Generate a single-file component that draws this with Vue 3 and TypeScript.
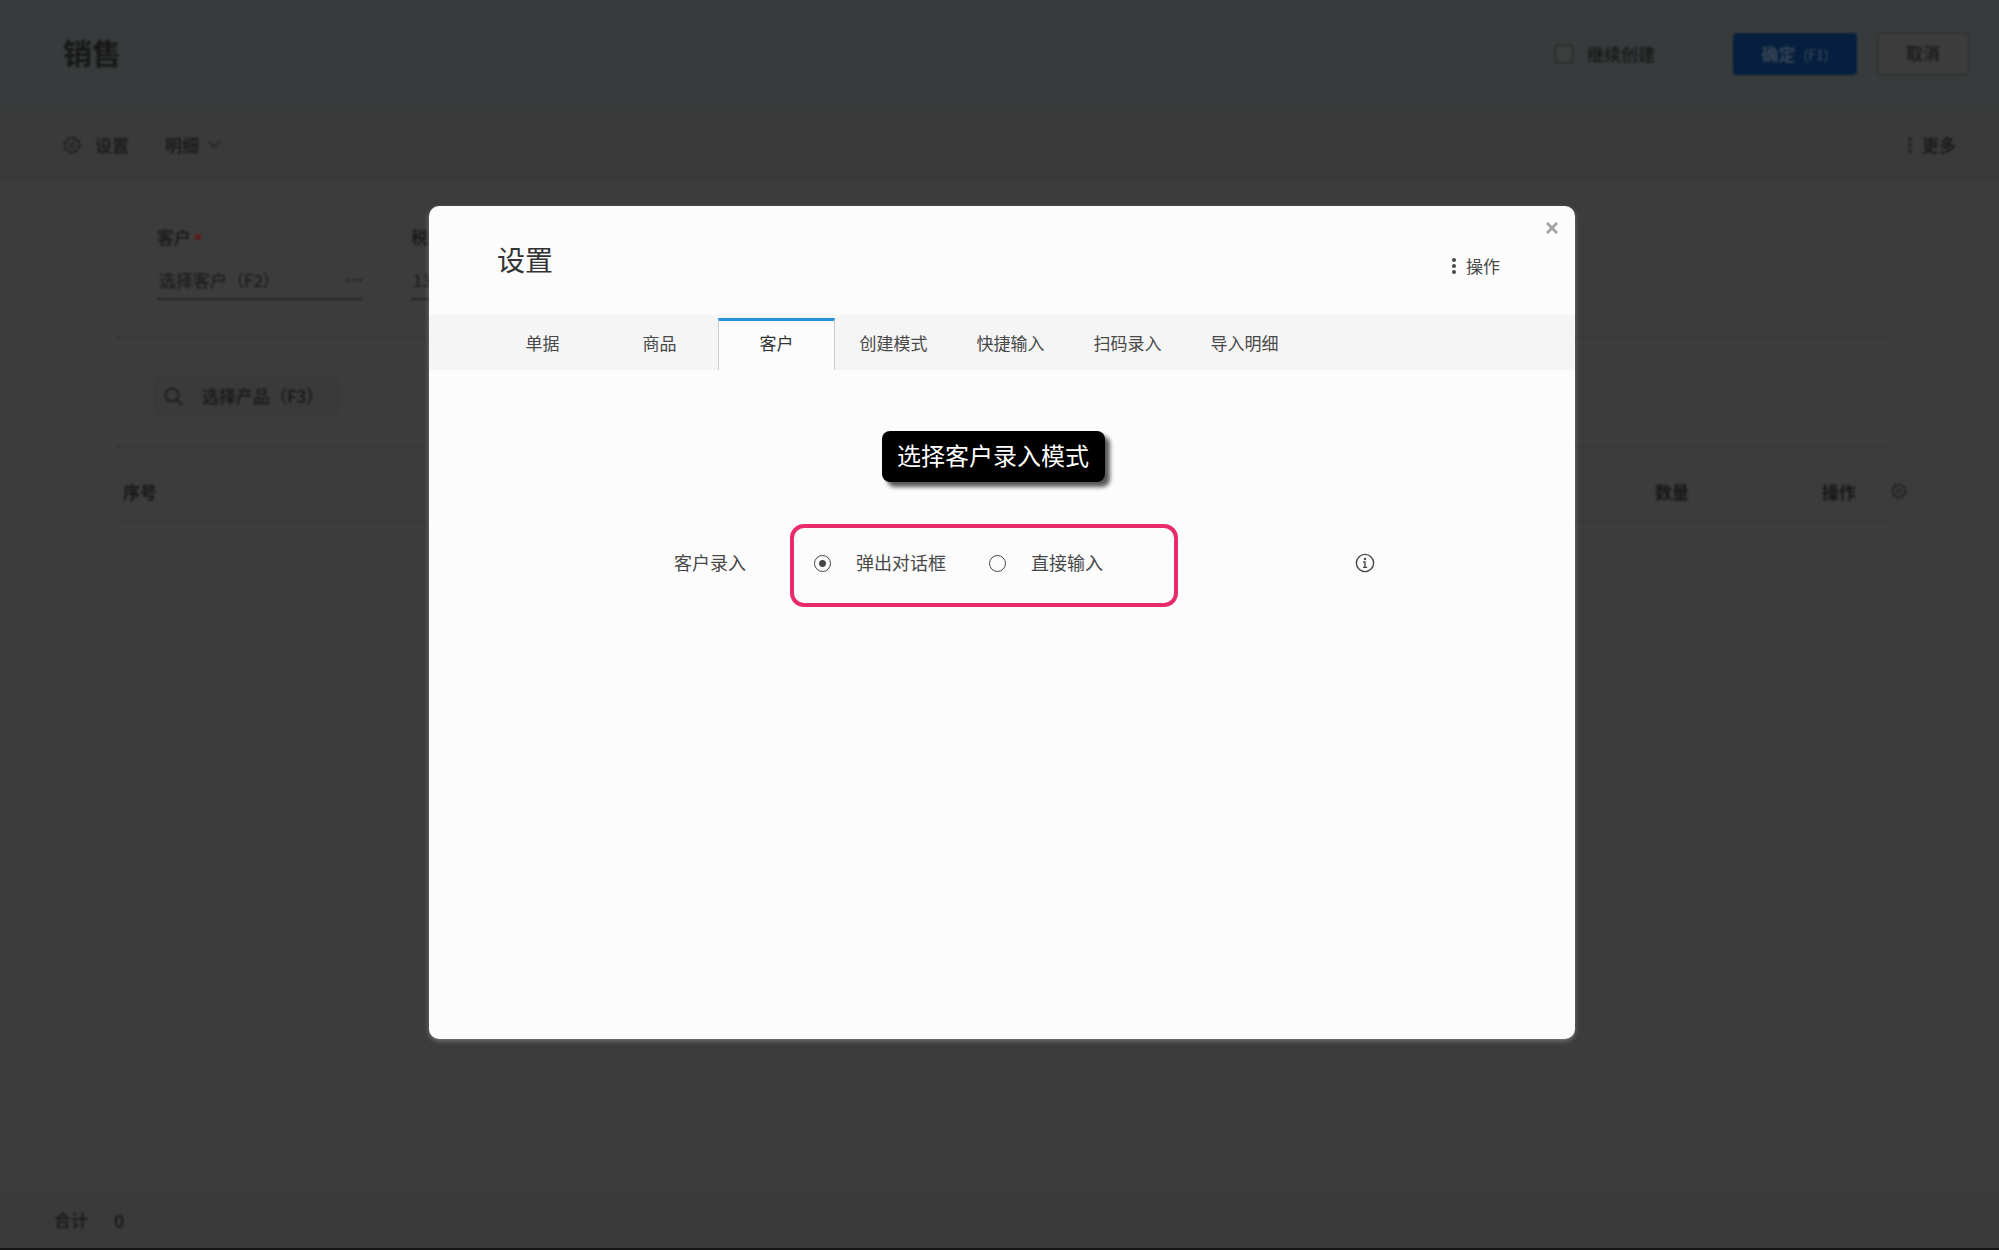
<script setup lang="ts">
import { ref } from 'vue'

const tabs: string[] = ['单据', '商品', '客户', '创建模式', '快捷输入', '扫码录入', '导入明细']
const activeTab = ref('客户')
const entryMode = ref('dialog')
const modes = [
  { value: 'dialog', label: '弹出对话框' },
  { value: 'direct', label: '直接输入' },
]
</script>

<template>
  <div class="app">
    <div class="page">
      <header class="topbar">
        <h1>销售</h1>
        <label class="again"><input type="checkbox" />继续创建</label>
        <button class="btn primary" type="button">确定 <small>(F1)</small></button>
        <button class="btn plain" type="button">取消</button>
      </header>

      <nav class="toolbar">
        <button type="button" class="tool">
          <svg class="gear" width="18" height="18" viewBox="0 0 18 18" fill="none" stroke="currentColor" stroke-width="1.3">
            <circle cx="9" cy="9" r="8" stroke-dasharray="3.3 3" stroke-width="1.6" />
            <circle cx="9" cy="9" r="6.8" />
            <circle cx="9" cy="9" r="2.4" />
          </svg>
          设置
        </button>
        <button type="button" class="tool detail">
          明细
          <svg width="14" height="9" viewBox="0 0 14 9" fill="none" stroke="currentColor" stroke-width="1.4"><path d="M1 1l6 6 6-6" /></svg>
        </button>
        <button type="button" class="tool more">
          <svg width="4" height="16" viewBox="0 0 4 16" fill="currentColor"><circle cx="2" cy="2" r="2" /><circle cx="2" cy="8" r="2" /><circle cx="2" cy="14" r="2" /></svg>
          更多
        </button>
      </nav>

      <main class="sheet">
        <form class="fields" @submit.prevent>
          <div class="field">
            <label for="customer">客户<i class="required"></i></label>
            <div class="control">
              <input id="customer" type="text" placeholder="选择客户（F2）" />
              <svg width="16" height="4" viewBox="0 0 16 4" fill="currentColor"><circle cx="2" cy="2" r="1.5" /><circle cx="8" cy="2" r="1.5" /><circle cx="14" cy="2" r="1.5" /></svg>
            </div>
          </div>
          <div class="field">
            <label for="tax">税率</label>
            <div class="control"><input id="tax" type="text" value="13" /></div>
          </div>
        </form>
        <hr class="divider" />

        <div class="picker">
          <button type="button" class="search">
            <svg width="19" height="19" viewBox="0 0 19 19" fill="none" stroke="currentColor" stroke-width="1.5"><circle cx="8" cy="8" r="6.5" /><path d="M12.7 12.7L18 18" /></svg>
            选择产品（F3）
          </button>
        </div>
        <hr class="divider" />

        <table class="items">
          <thead>
            <tr>
              <th>序号</th>
              <th class="qty">数量</th>
              <th class="ops">操作</th>
            </tr>
          </thead>
        </table>
        <button type="button" class="columns" aria-label="列设置">
          <svg width="16" height="16" viewBox="0 0 18 18" fill="none" stroke="currentColor" stroke-width="1.3">
            <circle cx="9" cy="9" r="8" stroke-dasharray="3.3 3" stroke-width="1.6" />
            <circle cx="9" cy="9" r="6.8" />
            <circle cx="9" cy="9" r="2.4" />
          </svg>
        </button>
      </main>

      <footer class="totals"><span>合计</span><span class="sum">0</span></footer>
    </div>

    <div class="overlay">
      <section class="dialog" role="dialog" aria-labelledby="dialog-title">
        <button class="close" type="button" aria-label="关闭">
          <svg width="12" height="12" viewBox="0 0 12 12" fill="none" stroke="currentColor" stroke-width="3"><path d="M1 1l10 10M11 1L1 11" /></svg>
        </button>
        <header class="dialog-head">
          <h2 id="dialog-title">设置</h2>
          <button type="button" class="actions">
            <svg width="4" height="16" viewBox="0 0 4 16" fill="currentColor"><circle cx="2" cy="2" r="2" /><circle cx="2" cy="8" r="2" /><circle cx="2" cy="14" r="2" /></svg>
            操作
          </button>
        </header>
        <div class="tabs" role="tablist">
          <button
            v-for="tab in tabs"
            :key="tab"
            type="button"
            role="tab"
            class="tab"
            :class="{ active: tab === activeTab }"
            :aria-selected="tab === activeTab"
            @click="activeTab = tab"
          >{{ tab }}</button>
        </div>
        <div class="dialog-body">
          <p class="hint">选择客户录入模式</p>
          <div class="setting">
            <span id="mode-label" class="setting-name">客户录入</span>
            <div class="modes" role="radiogroup" aria-labelledby="mode-label">
              <label v-for="mode in modes" :key="mode.value">
                <input v-model="entryMode" type="radio" name="mode" :value="mode.value" />
                <span>{{ mode.label }}</span>
              </label>
            </div>
            <button type="button" class="info" aria-label="说明">
              <svg width="20" height="20" viewBox="0 0 20 20" fill="none" stroke="currentColor" stroke-width="1.4">
                <circle cx="10" cy="10" r="8.6" />
                <circle cx="10" cy="6" r="1.2" fill="currentColor" stroke="none" />
                <path d="M8.2 9H10v5.2M8 14.4h4.2" />
              </svg>
            </button>
          </div>
        </div>
      </section>
    </div>
  </div>
</template>

<style>
body {
  margin: 0;
  background: #393a3a;
}
</style>

<style scoped>
.app {
  position: relative;
  min-height: 100vh;
  box-sizing: border-box;
  border-bottom: 2px solid #151515;
  display: flex;
  flex-direction: column;
  overflow: hidden;
  font-family: "Noto Sans CJK SC", "Noto Sans", sans-serif;
  font-size: 17px;
  line-height: 24px;
}
button,
input {
  font: inherit;
  color: inherit;
  margin: 0;
}
button {
  border: 0;
  padding: 0;
  background: none;
  display: flex;
  align-items: center;
}
h1,
h2,
p {
  margin: 0;
}
.page {
  flex: 1;
  display: flex;
  flex-direction: column;
  background: #3c3c3c;
  color: #161616;
  font-weight: 500;
  filter: blur(1px);
}
.topbar {
  height: 108px;
  padding: 0 30px 0 63px;
  box-sizing: border-box;
  display: flex;
  align-items: center;
  background: #373b3c;
}
h1 {
  margin-right: auto;
  padding-bottom: 4px;
  font-size: 29px;
  line-height: 40px;
  font-weight: 700;
}
.again {
  display: flex;
  align-items: center;
  gap: 14px;
  margin-right: 78px;
}
.again input {
  appearance: none;
  width: 18px;
  height: 18px;
  border: 1px solid #222424;
  border-radius: 2px;
  background: #3c3d3d;
}
.btn {
  height: 42px;
  box-sizing: border-box;
  justify-content: center;
  border-radius: 4px;
}
.primary {
  width: 124px;
  gap: 8px;
  margin-right: 20px;
  background: #061f3e;
  color: #414d5a;
}
.primary small {
  font-size: 14px;
  font-weight: 400;
}
.plain {
  width: 92px;
  padding-bottom: 3px;
  background: #3c3c3c;
  border: 1px solid #2a2c2c;
}
.toolbar {
  height: 73px;
  padding: 0 43px 0 63px;
  display: flex;
  align-items: center;
  background: #3a3a3a;
}
.tool {
  gap: 14px;
}
.tool svg {
  color: #202020;
}
.detail {
  margin-left: 36px;
  gap: 8px;
}
.more {
  margin-left: auto;
  gap: 10px;
}
.sheet {
  flex: 1;
  margin: 0 110px 0 116px;
  position: relative;
}
.divider {
  height: 2px;
  margin: 0;
  border: 0;
  background: repeating-linear-gradient(90deg, #323232 0 4px, transparent 4px 8px);
}
.fields {
  display: flex;
  gap: 49px;
  padding: 44px 0 36px 41px;
}
.field {
  width: 205px;
}
.field label {
  display: flex;
  align-items: center;
  gap: 4px;
}
.required {
  width: 6px;
  height: 6px;
  border-radius: 50%;
  background: #601515;
}
.control {
  display: flex;
  align-items: center;
  height: 36px;
  margin-top: 13px;
  border-bottom: 2px solid #242424;
}
.control input {
  flex: 1;
  min-width: 0;
  height: 24px;
  border: 0;
  padding: 0 0 0 2px;
  background: none;
  font-weight: 400;
}
.control input::placeholder {
  color: #161616;
  opacity: 1;
}
.control svg {
  color: #202020;
}
.picker {
  padding: 39px 0 31px 39px;
}
.search {
  width: 183px;
  height: 38px;
  box-sizing: border-box;
  padding-left: 8px;
  gap: 19px;
  white-space: nowrap;
  border: 1px solid #363636;
  border-radius: 4px;
  background: #3a3a3a;
}
.items {
  width: 100%;
  height: 75px;
  border-collapse: collapse;
  border-bottom: 1px solid #353535;
}
.items th {
  padding: 13px 0 0 7px;
  text-align: left;
  font-weight: 700;
}
.items .qty {
  width: 160px;
}
.items .ops {
  width: 67px;
}
.columns {
  position: absolute;
  right: -18px;
  top: 302px;
  color: #202020;
}
.totals {
  height: 53px;
  padding: 0 54px 2px;
  display: flex;
  align-items: center;
  gap: 26px;
  background: #3a3a3a;
}
.sum {
  font-size: 18px;
}
.overlay {
  position: absolute;
  inset: 0;
  padding: 206px 0 0 5px;
  display: flex;
  justify-content: center;
  align-items: flex-start;
}
.dialog {
  position: relative;
  width: 90%;
  max-width: 1146px;
  min-height: 833px;
  border-radius: 10px;
  background: #fcfcfc;
  color: #484848;
  box-shadow: 0 2px 5px rgba(255, 255, 255, 0.3);
}
.close {
  position: absolute;
  top: 16px;
  right: 17px;
  color: #a5a5a5;
}
.dialog-head {
  height: 109px;
  padding: 0 75px 0 68px;
  display: flex;
  align-items: center;
  justify-content: space-between;
}
h2 {
  padding-bottom: 3px;
  font-size: 28px;
  line-height: 40px;
  font-weight: 400;
  color: #333;
}
.actions {
  gap: 10px;
  padding-top: 11px;
}
.tabs {
  height: 55px;
  box-sizing: border-box;
  padding: 3px 0 0 55px;
  display: flex;
  background: #f5f5f5;
}
.tab {
  width: 117px;
  padding-bottom: 5px;
  justify-content: center;
  border: solid transparent;
  border-width: 3px 1px 0;
}
.tab.active {
  color: #333;
  background: #fcfcfc;
  border-color: #2492db #ccc transparent;
}
.dialog-body {
  padding: 61px 200px 40px 245px;
}
.hint {
  width: max-content;
  margin-left: 208px;
  padding: 6px 16px 9px 15px;
  border-radius: 8px;
  background: #000;
  color: #fff;
  font-size: 24px;
  line-height: 36px;
  box-shadow: 5px 5px 4px rgba(0, 0, 0, 0.65);
}
.setting {
  margin-top: 42px;
  display: flex;
  align-items: center;
  font-size: 18px;
}
.setting-name {
  width: 116px;
  padding-bottom: 8px;
}
.modes {
  width: 388px;
  height: 83px;
  box-sizing: border-box;
  padding: 0 20px 5px;
  display: flex;
  align-items: center;
  gap: 43px;
  border: 4px solid #e82c6b;
  border-radius: 14px;
}
.modes label {
  display: flex;
  align-items: center;
  gap: 25px;
}
.modes span {
  padding-bottom: 3px;
}
.modes input {
  appearance: none;
  width: 17px;
  height: 17px;
  border: 1px solid #444;
  border-radius: 50%;
}
.modes input:checked {
  background: radial-gradient(circle, #444 0 3px, transparent 4px);
}
.info {
  margin-left: auto;
  padding-bottom: 5px;
}
</style>
